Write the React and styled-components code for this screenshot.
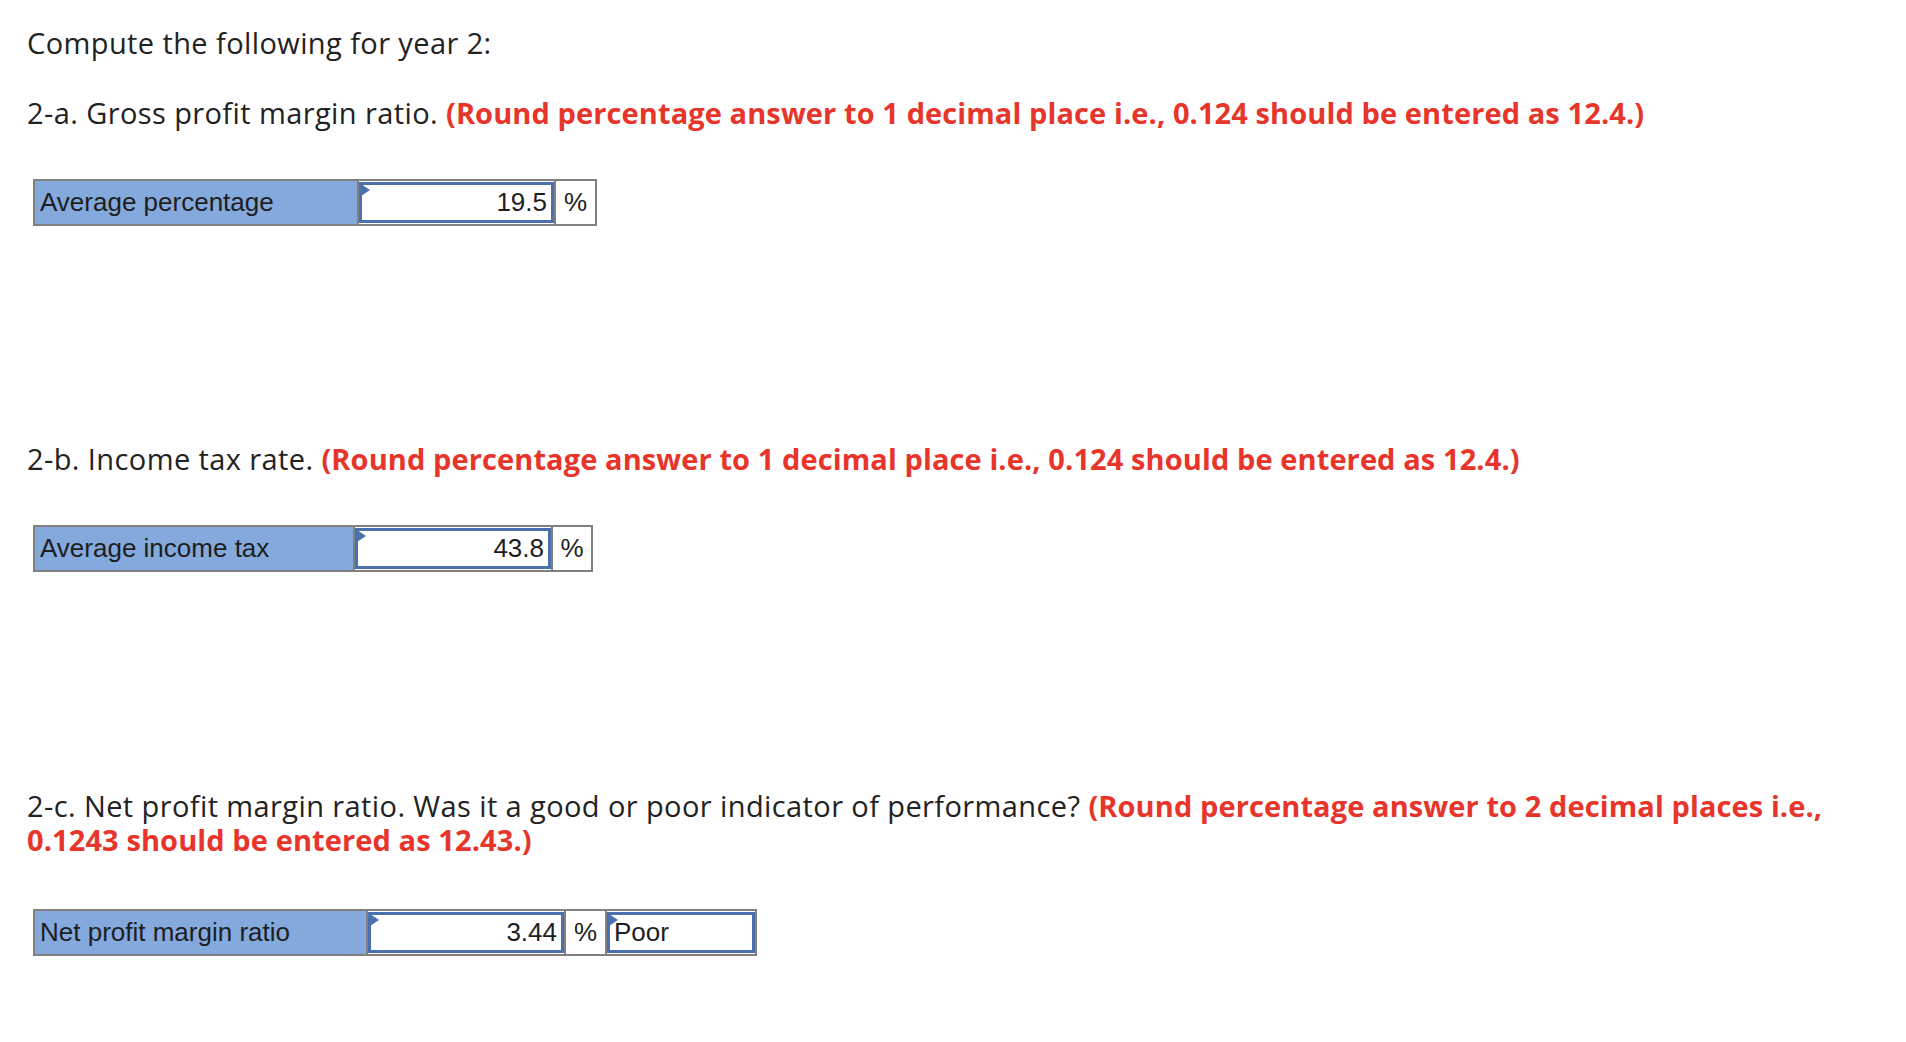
import styled, { createGlobalStyle } from 'styled-components';

const GlobalStyle = createGlobalStyle`
  body {
    margin: 0;
    background: #ffffff;
    font-family: 'Open Sans', Lato, sans-serif;
    color: #222222;
  }
`;

const Page = styled.div`
  padding: 26px 0 80px 27px;
`;

const Heading = styled.p`
  margin: 0;
  font-size: 29px;
  line-height: 34px;
  letter-spacing: 0.4px;
  color: #222222;
`;

const Section = styled.section`
  display: flex;
  flex-direction: column;
  align-items: flex-start;
  margin-top: ${(props) => props.gap || 0}px;
`;

const Note = styled.span`
  color: #e8352b;
  font-weight: 700;
  letter-spacing: 0.1px;
`;

const Table = styled.div`
  display: flex;
  margin: ${(props) => props.offset || 49}px 0 0 6px;
  border: 2px solid #808080;
  height: 43px;
  font-family: 'Liberation Sans', Arial, sans-serif;
  font-size: 26px;
  color: #1e1e1e;
`;

const Label = styled.div`
  width: ${(props) => props.width}px;
  background: #84a9dc;
  border-right: 2px solid #808080;
  display: flex;
  align-items: center;
  padding-left: 5px;
  box-sizing: border-box;
`;

const Entry = styled.div`
  position: relative;
  width: ${(props) => props.width}px;
  box-sizing: border-box;
  border: 3px solid #4a70ad;
  margin: 1px 0;
  background: #ffffff;
  display: flex;
  align-items: center;
  justify-content: ${(props) => (props.left ? 'flex-start' : 'flex-end')};
  padding: 0 4px;

  &::before {
    content: '';
    position: absolute;
    top: -1px;
    left: -1px;
    border-top: 6px solid transparent;
    border-bottom: 6px solid transparent;
    border-left: 9px solid #4a70ad;
  }
`;

const Unit = styled.div`
  width: ${(props) => props.width}px;
  box-sizing: border-box;
  border-left: 2px solid #808080;
  border-right: ${(props) => (props.divided ? '2px solid #808080' : 'none')};
  background: #ffffff;
  display: flex;
  align-items: center;
  justify-content: center;
`;

export default function App() {
  return (
    <>
      <GlobalStyle />
      <Page>
        <Heading>Compute the following for year 2:</Heading>

        <Section gap={36}>
          <Heading>
            2-a. Gross profit margin ratio.{' '}
            <Note>
              (Round percentage answer to 1 decimal place i.e., 0.124 should be
              entered as 12.4.)
            </Note>
          </Heading>
          <Table>
            <Label width={324}>Average percentage</Label>
            <Entry width={195}>19.5</Entry>
            <Unit width={41}>%</Unit>
          </Table>
        </Section>

        <Section gap={216}>
          <Heading>
            2-b. Income tax rate.{' '}
            <Note>
              (Round percentage answer to 1 decimal place i.e., 0.124 should be
              entered as 12.4.)
            </Note>
          </Heading>
          <Table>
            <Label width={320}>Average income tax</Label>
            <Entry width={196}>43.8</Entry>
            <Unit width={40}>%</Unit>
          </Table>
        </Section>

        <Section gap={217}>
          <Heading>
            2-c. Net profit margin ratio. Was it a good or poor indicator of
            performance?{' '}
            <Note>
              (Round percentage answer to 2 decimal places i.e.,
              <br />
              0.1243 should be entered as 12.43.)
            </Note>
          </Heading>
          <Table offset={52}>
            <Label width={333}>Net profit margin ratio</Label>
            <Entry width={196}>3.44</Entry>
            <Unit width={43} divided>
              %
            </Unit>
            <Entry width={148} left>
              Poor
            </Entry>
          </Table>
        </Section>
      </Page>
    </>
  );
}
